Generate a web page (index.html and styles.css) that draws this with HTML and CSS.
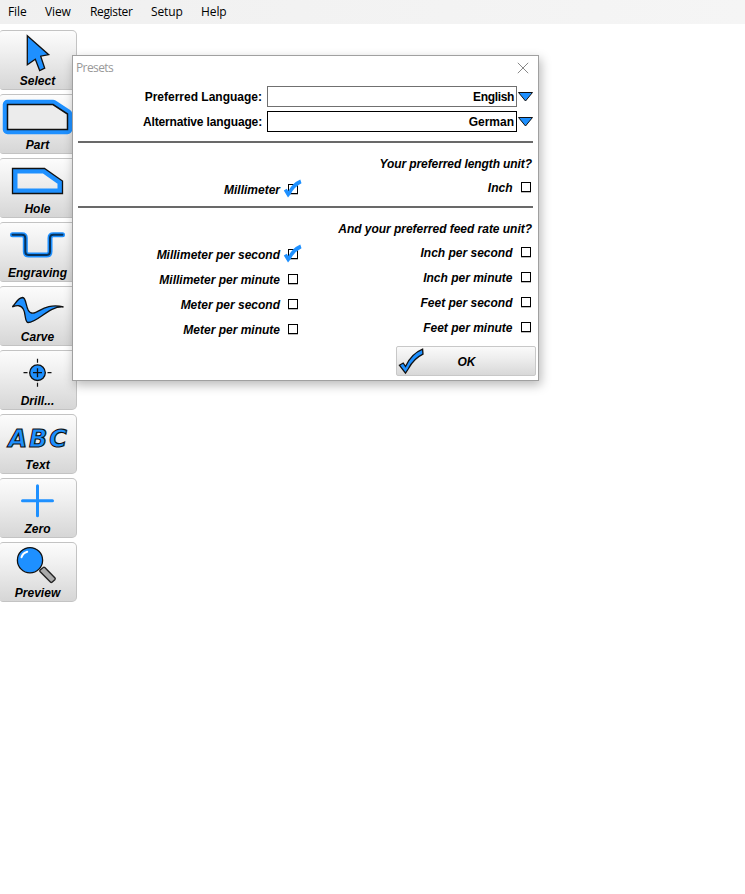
FILE: index.html
```html
<!DOCTYPE html>
<html lang="en">
<head>
<meta charset="utf-8">
<title>Presets</title>
<link rel="stylesheet" href="styles.css">
</head>
<body>
<nav class="menu"><span class="m-file">File</span><span class="m-view">View</span><span class="m-register">Register</span><span class="m-setup">Setup</span><span>Help</span></nav>
<main class="tools">
  <button class="tool"><svg viewBox="0 1 76 43"><path class="shape" d="M27.3 5.7 48.7 24.7 40.7 26.2 44.7 38.2 39.7 40.5 35.3 29.3 27.3 34.7Z"/></svg><span>Select</span></button>
  <button class="tool"><svg viewBox="0 1 76 43"><path class="part-glow" d="M7.5 10.5H53L67.5 20V35.5H7.5Z"/><path class="part-line" d="M7.5 10.5H53L67.5 20V35.5H7.5Z"/></svg><span>Part</span></button>
  <button class="tool"><svg viewBox="0 1 76 43"><path class="hole-band" d="M15 13H43.7L60 24.5V33H15Z"/><path class="line" d="M12.5 10.5H44.5L62.5 23V35.5H12.5Z"/></svg><span>Hole</span></button>
  <button class="tool"><svg viewBox="0 1 76 43"><path class="groove" d="M12.5 12.7H22Q25.3 12.7 25.3 16V29.5Q25.3 33 28.7 33H46.7Q50 33 50 29.5V16Q50 12.7 53.3 12.7H62.5"/><path class="groove-core" d="M12.5 12.7H22Q25.3 12.7 25.3 16V29.5Q25.3 33 28.7 33H46.7Q50 33 50 29.5V16Q50 12.7 53.3 12.7H62.5"/></svg><span>Engraving</span></button>
  <button class="tool"><svg viewBox="0 1 76 43"><path class="shape" d="M12.3 20.8C16 17.5 17.5 11.8 22.7 11.5C27.5 12 24.8 27.2 33 27.2C38 27 47 16.5 63.5 21C49 19.5 38 36.6 28 36.5C24.5 36 26 28 23.5 23.5C21 18.5 17 19.4 12.3 20.8Z"/></svg><span>Carve</span></button>
  <button class="tool"><svg viewBox="0 1 76 43"><path class="axis" d="M23.5 22.7H51.5M37.5 8.7V37"/><circle class="shape" cx="37.5" cy="22.7" r="7.8"/><path class="line" d="M33 22.7H42M37.5 18.2V27.2"/></svg><span>Drill...</span></button>
  <button class="tool"><svg viewBox="0 1 76 43"><text class="abc" x="8.5" y="33">ABC</text></svg><span>Text</span></button>
  <button class="tool"><svg viewBox="0 1 76 43"><path class="cross" d="M22.5 22.7H52.5M37.5 7.7V37.7"/></svg><span>Zero</span></button>
  <button class="tool"><svg viewBox="0 1 76 43"><circle class="shape" cx="30" cy="18.2" r="12.6"/><path class="glint" d="M21.5 15.3Q22.7 11 27.2 9.7"/><path class="handle" d="M43.2 25.5Q44 24.8 44.8 25.6L55 36Q55.6 36.8 54.8 37.7L52 40.2Q51.2 40.8 50.4 40L40 29.6Q39.4 28.8 40.2 28Z"/></svg><span>Preview</span></button>
</main>

<section class="dialog">
  <header class="title"><span>Presets</span><svg viewBox="0 0 12 12"><path d="M.8.8 11.2 11.2M11.2.8.8 11.2"/></svg></header>
  <div class="languages">
    <span class="label">Preferred Language:</span><div class="field english">English</div><svg class="arrow" viewBox="0 0 16 10"><path d="M.5 .5H14.5L7.5 9Z"/></svg>
    <span class="label alternative">Alternative language:</span><div class="field active">German</div><svg class="arrow" viewBox="0 0 16 10"><path d="M.5 .5H14.5L7.5 9Z"/></svg>
  </div>
  <div class="rule"></div>
  <div class="group length">
    <h2>Your preferred length unit?</h2>
    <div class="columns">
      <div class="column left"><label><span>Millimeter</span><i class="box"><svg viewBox="0 0 20 20"><path d="M.8 11.5 3.7 9.8 5.3 12Q9.5 4 17.3.5L18.5 4.2Q11 8 7.8 15L5 18.5Z"/></svg></i></label></div>
      <div class="column right"><label><span>Inch</span><i class="box"></i></label></div>
    </div>
  </div>
  <div class="rule"></div>
  <div class="group feed">
    <h2>And your preferred feed rate unit?</h2>
    <div class="columns">
      <div class="column left">
        <label><span>Millimeter per second</span><i class="box"><svg viewBox="0 0 20 20"><path d="M.8 11.5 3.7 9.8 5.3 12Q9.5 4 17.3.5L18.5 4.2Q11 8 7.8 15L5 18.5Z"/></svg></i></label>
        <label><span>Millimeter per minute</span><i class="box"></i></label>
        <label><span>Meter per second</span><i class="box"></i></label>
        <label><span>Meter per minute</span><i class="box"></i></label>
      </div>
      <div class="column right">
        <label><span>Inch per second</span><i class="box"></i></label>
        <label><span>Inch per minute</span><i class="box"></i></label>
        <label><span>Feet per second</span><i class="box"></i></label>
        <label><span>Feet per minute</span><i class="box"></i></label>
      </div>
    </div>
  </div>
  <button class="ok"><svg viewBox="0 0 28 28"><path class="shape" d="M2.4 18.2 6.2 16 8.5 19.5Q14.2 7 25.6 2.2L26 7.2Q16.8 11.5 11.2 22L8.5 26.2Z"/></svg><span>OK</span></button>
</section>
</body>
</html>
```
FILE: styles.css
```css
* { box-sizing: border-box; }
body {
  position: relative;
  margin: 0;
  height: 894px;
  overflow: hidden;
  background: #fff;
  color: #000;
  font: bold 12px/14px "Liberation Sans", Arial, sans-serif;
}
svg { display: block; }
.menu {
  display: flex;
  height: 24px;
  padding-left: 8px;
  background: linear-gradient(90deg, #f0f0f0, #f5f5f5);
  font: 12px/23px "Open Sans", "Noto Sans", sans-serif;
}
.menu span { letter-spacing: -.1px; }
.menu .m-register { letter-spacing: -.35px; }
.m-file { width: 37px; }
.m-view { width: 45px; }
.m-register { width: 61px; }
.m-setup { width: 50px; }
.tools { display: flex; flex-direction: column; gap: 4px; padding-top: 6px; }
.tool {
  display: flex;
  flex-direction: column;
  align-items: center;
  width: 77px;
  height: 60px;
  padding: 0;
  border: 1px solid #c3c3c3;
  border-left: 0;
  border-radius: 3px 5px 5px 3px;
  background: linear-gradient(#fcfcfc, #f0f0f0 35%, #d6d6d6);
  color: #000;
  font: italic bold 12px/14px "Liberation Sans", Arial, sans-serif;
}
.tool svg { width: 76px; height: 43px; }
.tool span { padding-right: 1px; letter-spacing: .05px; }
.shape { fill: #1e90ff; stroke: #111; stroke-width: 1.3; }
.line { fill: none; stroke: #111; stroke-width: 1.3; }
.part-glow { fill: none; stroke: #1e90ff; stroke-width: 9.5; stroke-linejoin: round; }
.part-line { fill: #ececec; stroke: #111; stroke-width: 1.5; }
.hole-band { fill: none; stroke: #1e90ff; stroke-width: 5; }
.groove { fill: none; stroke: #1e90ff; stroke-width: 5; stroke-linecap: round; }
.groove-core { fill: none; stroke: #073159; stroke-width: 2; stroke-linecap: round; }
.axis { stroke: #111; stroke-width: 1.2; stroke-dasharray: 4 2; }
.abc { font: italic bold 24px "DejaVu Sans", sans-serif; letter-spacing: 2px; fill: #1e90ff; stroke: #111; stroke-width: 1.1; }
.cross { stroke: #1e90ff; stroke-width: 3; stroke-linecap: round; }
.glint { fill: none; stroke: #fff; stroke-width: 2; stroke-linecap: round; }
.handle { fill: #aaa; stroke: #222; stroke-width: 1.4; }
.dialog {
  position: absolute;
  left: 72px;
  top: 55px;
  width: 467px;
  height: 326px;
  border: 1px solid #a0a0a0;
  background: #fff;
  box-shadow: 2px 4px 10px rgba(0, 0, 0, .28);
}
.title {
  display: flex;
  justify-content: space-between;
  height: 30px;
  padding: 6px 9px 0 3px;
  color: #999;
  font: 12px/12px "Open Sans", "Noto Sans", sans-serif;
}
.title span { letter-spacing: -.6px; }
.title svg { width: 12px; height: 12px; stroke: #888; stroke-width: 1; }
.languages {
  display: grid;
  grid-template-columns: 189px 250px 16px;
  grid-auto-rows: 21px;
  row-gap: 4px;
  align-items: center;
}
.label { text-align: right; }
.alternative { letter-spacing: -.14px; }
.languages .field {
  margin-left: 5px;
  width: 250px;
  height: 21px;
  padding: 3px 2px 0 0;
  border: 1px solid #707070;
  text-align: right;
}
.languages .english { letter-spacing: -.35px; }
.languages .active { border-color: #000; }
.arrow { width: 16px; height: 10px; margin-left: 6px; fill: #1e90ff; stroke: #111; }
.rule { width: 455px; height: 2px; margin-left: 5px; background: #696969; }
.languages + .rule { margin-top: 9px; }
h2 { margin: 0; padding-right: 6px; text-align: right; font: italic bold 12px/14px "Liberation Sans", Arial, sans-serif; }
.feed h2 { letter-spacing: -.03px; }
.length h2 { letter-spacing: -.09px; }
.group { padding-top: 14px; font-style: italic; }
.length { height: 63px; }
.columns { display: flex; }
.column { display: flex; flex-direction: column; gap: 11px; }
.left { width: 226px; padding-top: 12px; }
.right { width: 233px; padding-top: 10px; }
.column label { display: flex; justify-content: flex-end; align-items: flex-start; gap: 8px; height: 14px; padding-right: 1px; }
.right label { gap: 8.5px; }
.box { position: relative; width: 10px; height: 10px; margin-top: 1px; border: 1px solid #000; box-shadow: 0 1px #bbb; }
.box svg { position: absolute; left: -6px; top: -6px; width: 20px; height: 20px; fill: #1e90ff; }
.ok {
  display: flex;
  align-items: center;
  width: 140px;
  height: 30px;
  margin: 9px 0 0 323px;
  padding: 0;
  border: 1px solid #c8c8c8;
  border-radius: 2px;
  background: linear-gradient(#fafafa, #eee 40%, #d8d8d8);
  color: #000;
  font: italic bold 12px/14px "Liberation Sans", Arial, sans-serif;
}
.ok svg { width: 28px; height: 28px; }
.ok span { width: 83px; padding-top: 1px; text-align: center; }
```
